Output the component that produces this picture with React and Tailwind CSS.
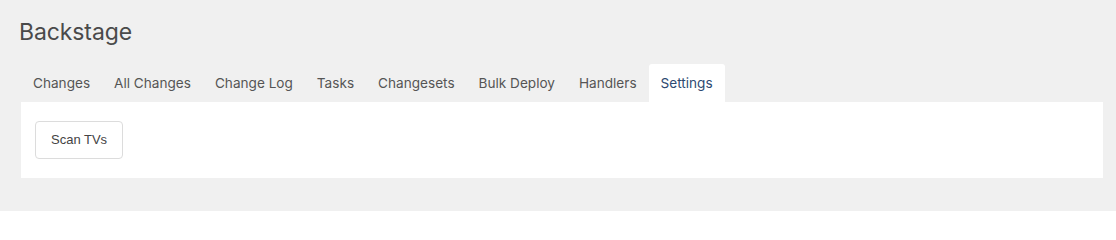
const tabs = ['Changes', 'All Changes', 'Change Log', 'Tasks', 'Changesets', 'Bulk Deploy', 'Handlers', 'Settings']

export default function App() {
  const active = 'Settings'
  return (
    <div className="min-h-[211px] bg-[#f0f0f0] pl-[21px] pr-[13px] pt-[17px] font-['Inter',sans-serif]">
      <h1 className="-ml-[2px] text-[23px] leading-[30px] text-[#4a4a4a] tracking-[-0.1px]">Backstage</h1>

      <nav className="mt-[17px] flex">
        {tabs.map((t) => {
          const isActive = t === active
          return (
            <div
              key={t}
              className={`px-3 h-[38px] flex items-center text-[13.6px] rounded-t-[3px] ${
                isActive ? 'bg-white text-[#2d4a72]' : 'text-[#555]'
              }`}
            >
              {t}
            </div>
          )
        })}
      </nav>

      <div className="bg-white h-[76px] pl-[14px] pt-[19px]">
        <button className="h-[38px] px-[15px] border border-[#dcdcdc] rounded-[4px] bg-white text-[13px] text-[#444] font-['Liberation_Sans',Arial,sans-serif]">
          Scan TVs
        </button>
      </div>
    </div>
  )
}
